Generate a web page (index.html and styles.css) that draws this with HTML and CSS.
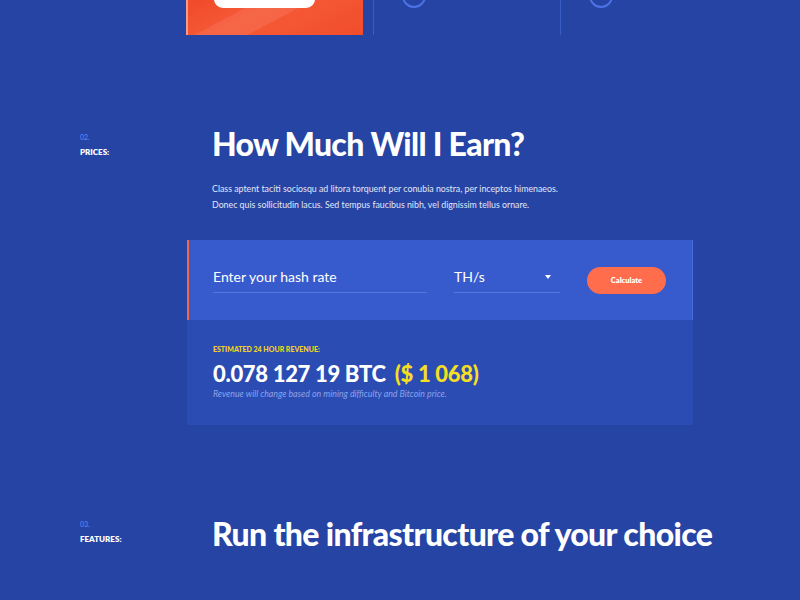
FILE: index.html
```html
<!DOCTYPE html>
<html lang="en">
<head>
<meta charset="utf-8">
<title>How Much Will I Earn?</title>
<link rel="stylesheet" href="styles.css">
</head>
<body>
<div class="page">
  <div class="features-top">
    <div class="feat-col first">
      <div class="feat-card"><div class="feat-card-pill"></div></div>
    </div>
    <div class="feat-col line">
      <div class="feat-circle"></div>
    </div>
    <div class="feat-col line">
      <div class="feat-circle"></div>
    </div>
  </div>

  <section class="section prices">
    <div class="sec-label">
      <div class="sec-num">02.</div>
      <div class="sec-name">PRICES:</div>
    </div>
    <div class="sec-main">
      <h2 class="sec-title">How Much Will I Earn?</h2>
      <p class="sec-text">Class aptent taciti sociosqu ad litora torquent per conubia nostra, per inceptos himenaeos.<br>Donec quis sollicitudin lacus. Sed tempus faucibus nibh, vel dignissim tellus ornare.</p>

      <div class="calc">
        <div class="calc-form">
          <div class="field hash">Enter your hash rate</div>
          <div class="field unit"><span>TH/s</span><span class="caret"></span></div>
          <button class="calc-btn">Calculate</button>
        </div>
        <div class="calc-result">
          <div class="res-label">ESTIMATED 24 HOUR REVENUE:</div>
          <div class="res-value">0.078 127 19 BTC <span class="usd">($ 1 068)</span></div>
          <div class="res-note">Revenue will change based on mining difficulty and Bitcoin price.</div>
        </div>
      </div>
    </div>
  </section>

  <section class="section features">
    <div class="sec-label">
      <div class="sec-num">03.</div>
      <div class="sec-name">FEATURES:</div>
    </div>
    <div class="sec-main">
      <h2 class="sec-title nowrap">Run the infrastructure of your choice</h2>
    </div>
  </section>
</div>
</body>
</html>
```

FILE: styles.css
```css
* { box-sizing: border-box; }
html, body {
  margin: 0;
  padding: 0;
  background: #2644a4;
}
body {
  font-family: "Lato", "Open Sans", sans-serif;
  color: #fff;
  width: 800px;
  height: 600px;
  overflow: hidden;
}
.page { width: 800px; }

/* top features strip (cropped) */
.features-top {
  display: flex;
  height: 35px;
  padding-left: 186px;
}
.feat-col {
  width: 187px;
  height: 35px;
  overflow: hidden;
}
.feat-col.line {
  border-left: 1px solid #3a5cc6;
  padding-left: 28px;
}
.feat-card {
  width: 177px;
  height: 35px;
  border-left: 2px solid #f79a86;
  background:
    linear-gradient(152deg, rgba(255,255,255,0) 0 30%, rgba(255,255,255,0.08) 30% 52%, rgba(255,255,255,0) 52% 100%),
    linear-gradient(152deg, #f04a2b 0%, #f65a37 40%, #f14d2c 100%);
  overflow: hidden;
}
.feat-card-pill {
  width: 101px;
  height: 30px;
  margin-top: -22px;
  margin-left: 26px;
  background: #fff;
  border-radius: 9px;
}
.feat-circle {
  width: 24px;
  height: 24px;
  margin-top: -16px;
  border: 2px solid #4d72e6;
  border-radius: 50%;
}

/* sections */
.section {
  display: flex;
  padding-left: 80px;
}
.sec-label {
  width: 107px;
  flex: none;
}
.sec-num {
  font-size: 7px;
  color: #5a80f2;
  line-height: 10px;
  font-weight: 600;
}
.sec-name {
  font-size: 8px;
  font-weight: 800;
  line-height: 10px;
  margin-top: 5px;
}
.sec-main {
  width: 506px;
  flex: none;
}
.sec-title {
  margin: 0;
  padding-left: 25px;
  font-size: 32px;
  line-height: 40px;
  font-weight: 900;
  letter-spacing: -0.7px;
}
.sec-title.nowrap {
  white-space: nowrap;
  letter-spacing: -0.65px;
}
.prices { margin-top: 89px; }
.prices .sec-label { padding-top: 8px; }
.sec-text {
  margin: 17px 0 0;
  padding-left: 25px;
  font-size: 8.8px;
  line-height: 16px;
  color: #e1e7f8;
}

/* calculator */
.calc { margin-top: 27px; }
.calc-form {
  height: 80px;
  background: #375bcd;
  border-left: 2px solid #f06a4a;
  border-right: 1px solid #4a6ddb;
  display: flex;
  align-items: center;
  padding-left: 24px;
}
.field {
  height: 26px;
  border-bottom: 1px solid #5679e0;
  font-size: 14px;
  line-height: 20px;
  color: #fff;
}
.field.hash { width: 214px; }
.field.unit {
  width: 106px;
  margin-left: 27px;
  display: flex;
  justify-content: space-between;
  padding-right: 9px;
}
.caret {
  width: 0;
  height: 0;
  margin-top: 8px;
  border-left: 3px solid transparent;
  border-right: 3px solid transparent;
  border-top: 4px solid #fff;
}
.calc-btn {
  margin-left: 27px;
  width: 79px;
  height: 27px;
  border: 0;
  border-radius: 14px;
  background: #ff6d4c;
  color: #fff;
  font-family: inherit;
  font-size: 7.5px;
  font-weight: 800;
  margin-top: 0;
}
.calc-result {
  height: 105px;
  background: #2b4cb3;
  padding: 24px 0 0 26px;
}
.res-label {
  font-size: 7px;
  font-weight: 900;
  color: #f3d51c;
  line-height: 10px;
}
.res-value {
  margin-top: 7px;
  font-size: 22px;
  font-weight: 900;
  line-height: 26px;
  letter-spacing: -0.3px;
}
.usd { color: #f5de23; margin-left: 4px; }
.res-note {
  margin-top: 1px;
  font-size: 8.8px;
  font-style: italic;
  color: #8aa3ec;
  line-height: 12px;
}

.features { margin-top: 89px; }
.features .sec-label { padding-top: 5px; }
```
